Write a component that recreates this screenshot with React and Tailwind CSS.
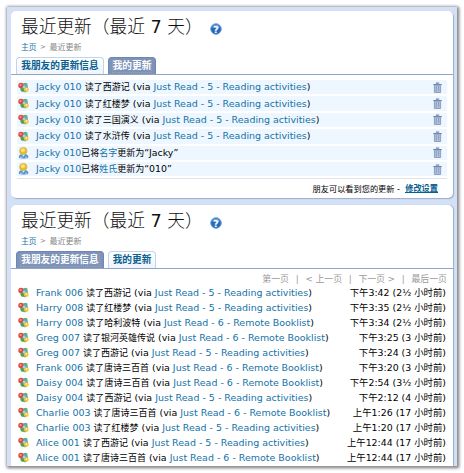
import React from 'react';

const mine = [
  ['西游记'], ['红楼梦'], ['三国演义'], ['水浒传'],
];
const friends = [
  ['Frank 006', '西游记', 5, '下午3:42 (2½ 小时前)'],
  ['Harry 008', '红楼梦', 5, '下午3:35 (2½ 小时前)'],
  ['Harry 008', '哈利波特', 6, '下午3:34 (2½ 小时前)'],
  ['Greg 007', '银河英雄传说', 6, '下午3:25 (3 小时前)'],
  ['Greg 007', '西游记', 5, '下午3:24 (3 小时前)'],
  ['Frank 006', '唐诗三百首', 6, '下午3:20 (3 小时前)'],
  ['Daisy 004', '唐诗三百首', 6, '下午2:54 (3½ 小时前)'],
  ['Daisy 004', '西游记', 5, '下午2:12 (4 小时前)'],
  ['Charlie 003', '唐诗三百首', 6, '上午1:26 (17 小时前)'],
  ['Charlie 003', '红楼梦', 5, '上午1:20 (17 小时前)'],
  ['Alice 001', '西游记', 5, '上午12:44 (17 小时前)'],
  ['Alice 001', '唐诗三百首', 6, '上午12:44 (17 小时前)'],
];

const Cn = ({ children, className = '' }) => (
  <span className={`text-[9px] ${className}`}>{children}</span>
);
const Link = ({ children }) => <span className="text-[#1673a8]">{children}</span>;

function ActivityIcon() {
  return (
    <svg className="block h-[11px] w-[11px] shrink-0" viewBox="0 0 11 11">
      <path d="M1.5 4.5 3.5 1.5 8 1.5 10 5l-.2 3.6-2.6 1.8L3.4 8.8Z" fill="#8597a0" />
      <circle cx="3" cy="3.5" r="2.7" fill="#e2463c" />
      <circle cx="7.5" cy="3" r="2.2" fill="#5fae94" />
      <circle cx="4.7" cy="7.6" r="2.2" fill="#4fa04f" />
      <circle cx="8.3" cy="7.6" r="2.4" fill="#eec637" />
      <circle cx="6.1" cy="5.1" r="1.5" fill="#a9cdf0" />
      <circle cx="2.6" cy="2.9" r="1" fill="#f7a198" />
      <circle cx="8.5" cy="7" r=".9" fill="#fff0a0" />
    </svg>
  );
}

function UserIcon() {
  return (
    <svg className="block h-[12px] w-[11px] shrink-0" viewBox="0 0 11 12">
      <path d="M.9 10.5Q.5 7.4 4 7.2h3q3.6.2 3.3 3.3-.5 1-4.7 1t-4.7-1Z" fill="#4a8ed4" />
      <path d="M3.7 7.3 5.5 9.8l1.8-2.5" fill="#eaf5ff" />
      <circle cx="5.3" cy="4" r="3.8" fill="#e8bb35" stroke="#c19a34" strokeWidth=".3" />
      <circle cx="4.9" cy="3.2" r="1.9" fill="#ffe477" />
      <path d="M1.8 10.2h3M7 10.2h2" stroke="#b9dcf8" />
    </svg>
  );
}

function Trash() {
  return (
    <svg className="block h-[11px] w-[9px] shrink-0" viewBox="0 0 9 11" fill="none">
      <path d="M1.4 3h6.2v7.5H1.4Z" fill="#b4c4dd" stroke="#8498bd" strokeWidth=".9" />
      <path d="M.2 2.5h8.6M2.8 1.2h3.4" stroke="#7188b2" strokeWidth="1.2" />
      <path d="M3.3 4v5.4M5.7 4v5.4" stroke="#7b90b7" strokeWidth=".8" />
    </svg>
  );
}

function Help() {
  return (
    <svg className="ml-[10px] mt-[2px] block h-[12px] w-[12px]" viewBox="0 0 12 12">
      <circle cx="6" cy="6" r="5.3" fill="#2868b4" stroke="#6fa2d8" />
      <path d="M2 4.2a4.3 4.3 0 0 1 8 0Q6 5.7 2 4.2Z" fill="#6da4e0" />
      <text x="6" y="9.5" textAnchor="middle" fill="#fff" className="font-['DejaVu_Sans'] text-[9.5px] font-bold">?</text>
    </svg>
  );
}

function Heading() {
  return (
    <>
      <div className="flex h-[29px] items-center pl-[10px] pt-px text-[17.7px] text-[#111]">
        <span className="w-[179px] whitespace-pre font-['DejaVu_Sans','Noto_Sans_CJK_SC_Light','Noto_Sans_CJK_SC',sans-serif] font-light">最近更新（最近<span className="font-normal"> 7 </span>天）</span>
        <Help />
      </div>
      <div className="flex h-[11px] items-center gap-[3.5px] pl-[10px] text-[7.8px] text-[#888]">
        <span className="text-[#1673a8]">主页</span><span className="text-[7px]">&gt;</span><span className="text-[8px]">最近更新</span>
      </div>
      <div className="h-[4px]" />
    </>
  );
}

function Tab({ active, wide, children }) {
  return (
    <div className={`flex h-[17px] items-center justify-center rounded-t-[4px] border border-b-0 text-[9.7px] font-bold ${wide ? 'w-[88px]' : 'w-[48px]'} ${active ? 'border-[#6e86b0] bg-[#7c94bb] text-white' : 'border-[#c3d3e9] bg-linear-to-b from-white to-[#eff4fb] text-[#07608f]'}`}>
      {active ? <span className="flex h-[13px] items-center whitespace-nowrap border border-dotted border-[#a9a394]">{children}</span> : children}
    </div>
  );
}

function Tabs({ first }) {
  return (
    <div className="flex h-[18px] items-end gap-[4px] border-b border-[#8fa5c8] pl-[5px]">
      <Tab active={first} wide>我朋友的更新信息</Tab>
      <Tab active={!first}>我的更新</Tab>
    </div>
  );
}

function Entry({ name, book, n }) {
  return (
    <span className="whitespace-pre text-[9.47px]">
      <Link>{name}</Link> <Cn>读了{book}</Cn> (via <Link>Just Read - {n} - {n === 5 ? 'Reading activities' : 'Remote Booklist'}</Link>)
    </span>
  );
}

function MineRow({ icon, children }) {
  return (
    <div className="flex h-[14.4px] items-center bg-[#eef7ff] pl-[1px] pr-[5px]">
      {icon}
      <span className="ml-[7px] flex-1 whitespace-pre">{children}</span>
      <Trash />
    </div>
  );
}

export default function App() {
  return (
    <div className="h-[473px] w-[464px] overflow-hidden bg-white pl-[7px] pt-[7px] font-['DejaVu_Sans','Noto_Sans_CJK_SC',sans-serif] text-[9.4px] leading-none text-black">
      <div className="flex h-[459px] w-[450px] flex-col bg-[#d3e0f5] pl-[4px] pr-[4px] pt-[4px] shadow-[0_0_3px_#aaa,1px_1px_3px_1px_#777]">
        <section className="h-[187px] rounded-[5px] bg-white pt-[2px] shadow-[1px_1px_1px_#9cadca]">
          <Heading />
          <Tabs />
          <div className="mt-[5px] flex flex-col gap-[2px] pl-[6px] pr-[6px]">
            {mine.map(([b]) => <MineRow key={b} icon={<ActivityIcon />}><Entry name="Jacky 010" book={b} n={5} /></MineRow>)}
            <MineRow icon={<UserIcon />}><Link>Jacky 010</Link><Cn>已将</Cn><Link><Cn>名字</Cn></Link><Cn>更新为</Cn>“Jacky”</MineRow>
            <MineRow icon={<UserIcon />}><Link>Jacky 010</Link><Cn>已将</Cn><Link><Cn>姓氏</Cn></Link><Cn>更新为</Cn>“010”</MineRow>
          </div>
          <div className="mx-[6px] mt-[2px] flex h-[20px] items-center justify-end whitespace-pre border-t border-[#dce5ee] pr-[9px] text-[8.2px]">
            朋友可以看到您的更新 -  <span className="border-b border-[#07608f] font-bold text-[#07608f]">修改设置</span>
          </div>
        </section>
        <section className="mt-[7px] h-[261px] shrink-0 overflow-hidden rounded-t-[5px] bg-white pt-[2px] shadow-[1px_0_1px_#9cadca]">
          <Heading />
          <Tabs first />
          <div className="mr-[6px] mt-[5px] flex h-[11px] items-center justify-end gap-[6.8px] text-[8.9px] text-[#999]">
            <span>第一页</span><span>|</span><span className="tracking-[-0.1px]">&lt; 上一页</span><span>|</span><span className="tracking-[-0.1px]">下一页 &gt;</span><span>|</span><span>最后一页</span>
          </div>
          <div className="pl-[7px] pr-[7px]">
            {friends.map(([name, book, n, time], i) => (
              <div key={i} className="flex h-[15px] items-center">
                <ActivityIcon />
                <span className="ml-[7px] flex-1"><Entry name={name} book={book} n={n} /></span>
                <span className="whitespace-pre">{time}</span>
              </div>
            ))}
          </div>
        </section>
      </div>
    </div>
  );
}
